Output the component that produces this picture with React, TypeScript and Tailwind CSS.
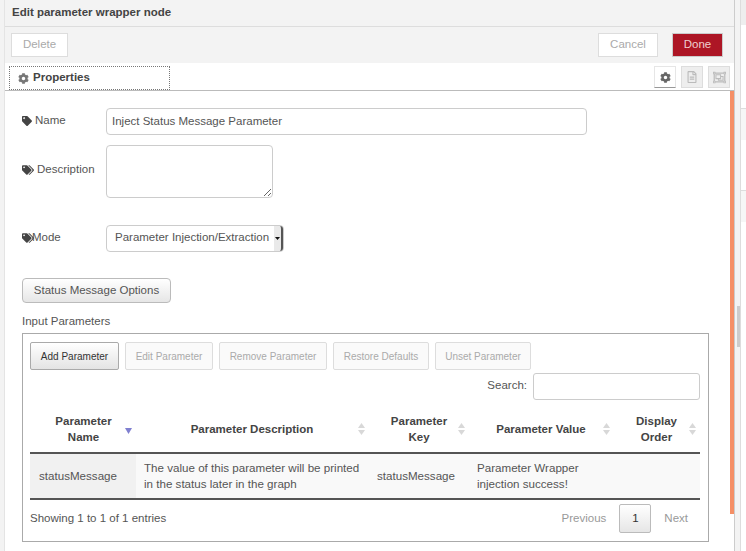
import { FaCog, FaRegFileAlt, FaRegObjectGroup, FaTag, FaTags } from "react-icons/fa";

const DISABLED_ACTIONS = [
  { label: "Edit Parameter", width: "w-[88px]" },
  { label: "Remove Parameter", width: "w-[108px]" },
  { label: "Restore Defaults", width: "w-[96px]" },
  { label: "Unset Parameter", width: "w-[96px]" },
];

function SortIcon({ active }: { active?: boolean }) {
  if (active) {
    return (
      <svg width="7" height="6" viewBox="0 0 7 6" className="shrink-0">
        <path d="M0 0h7L3.5 6z" fill="#8080d0" />
      </svg>
    );
  }
  return (
    <svg width="7" height="12" viewBox="0 0 7 12" className="shrink-0">
      <path d="M3.5 0L7 5H0z" fill="#d8d8d8" />
      <path d="M0 7h7l-3.5 5z" fill="#d8d8d8" />
    </svg>
  );
}

function HeadCell({ children, active, pad }: { children: React.ReactNode; active?: boolean; pad: string }) {
  return (
    <th className="p-0 pt-[5px] align-middle font-bold text-[#444]">
      <div className={`flex items-center justify-between leading-4 ${pad}`}>
        <span className="flex-1 text-center">{children}</span>
        <span className={active ? "mt-[4px]" : ""}>
          <SortIcon active={active} />
        </span>
      </div>
    </th>
  );
}

function IconButton({ children, active }: { children: React.ReactNode; active?: boolean }) {
  return (
    <div
      className={`flex h-[22px] w-[22px] items-center justify-center border ${
        active ? "border-[#e6e6e6] border-b-[#999] bg-white text-[#666]" : "border-[#ddd] bg-[#eee] text-[#bbb]"
      }`}
    >
      {children}
    </div>
  );
}

export default function App() {
  return (
    <div className="flex h-[551px] w-[746px] overflow-hidden bg-[#f3f3f3] font-['Liberation_Sans',sans-serif] text-[11.5px] text-[#555]">
      <div className="w-[5px] shrink-0 border-r border-[#e4e4e4] bg-[#f3f3f3]" />

      <div className="flex w-[730px] shrink-0 flex-col border-r border-[#ccc] bg-white">
        <div className="flex h-[27px] shrink-0 items-center border-b border-[#ddd] bg-[#f3f3f3] pl-[7px] font-bold text-[#444]">
          Edit parameter wrapper node
        </div>

        <div className="flex h-[36px] shrink-0 items-center bg-[#f3f3f3] pl-[6px] pr-[11px]">
          <button className="h-[24px] w-[57px] border border-[#ddd] bg-white text-[#aaa]">Delete</button>
          <button className="ml-auto h-[24px] w-[60px] border border-[#ddd] bg-white text-[#aaa]">Cancel</button>
          <button className="ml-[14px] h-[24px] w-[51px] border border-[#ccc] bg-[#ad1625] text-[#f0d0d0]">Done</button>
        </div>

        <div className="flex h-[28px] shrink-0 items-end border-b border-[#bbb] pl-[4px] pr-[4px]">
          <div className="flex h-[24px] w-[161px] items-center gap-[4px] border border-dotted border-[#777] bg-white pl-[8px] font-bold text-[#444]">
            <FaCog size={11} className="text-[#777]" />
            Properties
          </div>
          <div className="mb-[2px] ml-auto flex gap-[5px]">
            <IconButton active>
              <FaCog size={11} />
            </IconButton>
            <IconButton>
              <FaRegFileAlt size={12} />
            </IconButton>
            <IconButton>
              <FaRegObjectGroup size={13} />
            </IconButton>
          </div>
        </div>

        <div className="relative flex-1 pl-[17px] pr-[26px] pt-[16px]">
          <div className="absolute right-0 top-0 h-[423px] w-[4px] bg-[#f58f66]" />

          <div className="flex h-[28px] items-center">
            <label className="flex w-[84px] items-center gap-[3px]">
              <FaTag size={10} className="text-[#444]" />
              Name
            </label>
            <input
              readOnly
              value="Inject Status Message Parameter"
              className="h-[27px] w-[481px] rounded-[4px] border border-[#ccc] px-[5px] text-[#555] outline-none"
            />
          </div>

          <div className="mt-[10px] flex items-start">
            <label className="flex h-[50px] w-[84px] items-center gap-[3px]">
              <FaTags size={12} className="text-[#444]" />
              Description
            </label>
            <textarea
              readOnly
              className="block h-[53px] w-[167px] rounded-[4px] border border-[#ccc] outline-none"
            />
          </div>

          <div className="mt-[26px] flex h-[28px] items-center">
            <label className="flex w-[84px] items-center">
              <FaTags size={12} className="-mr-[2px] text-[#444]" />
              Mode
            </label>
            <div className="flex h-[27px] w-[178px] items-center justify-between rounded-[4px] border border-[#ccc] pl-[8px]">
              <span className="whitespace-nowrap">Parameter Injection/Extraction</span>
              <span className="flex h-full w-[9px] items-center justify-center rounded-r-[3px] border-r-2 border-[#555] bg-[#e9e9e9]">
                <svg width="5" height="3" viewBox="0 0 5 3">
                  <path d="M0 0h5L2.5 3z" fill="#111" />
                </svg>
              </span>
            </div>
          </div>

          <button className="mt-[26px] block h-[25px] w-[149px] rounded-[4px] border border-[#bbb] bg-gradient-to-b from-white to-[#e6e6e6] text-[#555]">
            Status Message Options
          </button>

          <div className="mt-[11px] leading-[14px]">Input Parameters</div>

          <div className="mt-[5px] h-[209px] w-[687px] border border-[#aaa] pl-[7px] pr-[8px] pt-[8px]">
            <div className="flex gap-[6px]">
              <button className="h-[28px] w-[89px] rounded-[2px] border border-[#aaa] bg-gradient-to-b from-white to-[#e4e4e4] text-[10px] text-[#333]">
                Add Parameter
              </button>
              {DISABLED_ACTIONS.map((action) => (
                <button
                  key={action.label}
                  className={`h-[28px] rounded-[2px] border border-[#ddd] bg-[#fafafa] text-[10px] text-[#aaa] ${action.width}`}
                >
                  {action.label}
                </button>
              ))}
            </div>

            <div className="mt-[3px] flex h-[27px] items-center justify-end gap-[6px]">
              <span className="-mt-[2px]">Search:</span>
              <input readOnly className="h-[27px] w-[167px] rounded-[3px] border border-[#ccc] outline-none" />
            </div>

            <table className="w-[670px] table-fixed border-collapse">
              <colgroup>
                <col className="w-[106px]" />
                <col className="w-[233px]" />
                <col className="w-[102px]" />
                <col className="w-[139px]" />
                <col className="w-[90px]" />
              </colgroup>
              <thead>
                <tr className="h-[53px] border-b-2 border-[#555]">
                  <HeadCell active pad="pl-[12px] pr-[4px]">
                    Parameter Name
                  </HeadCell>
                  <HeadCell pad="pl-[10px] pr-[4px]">Parameter Description</HeadCell>
                  <HeadCell pad="pl-[11px] pr-[6px]">
                    Parameter
                    <br />
                    Key
                  </HeadCell>
                  <HeadCell pad="pl-[8px]">Parameter Value</HeadCell>
                  <HeadCell pad="pl-[14px] pr-[4px]">
                    Display
                    <br />
                    Order
                  </HeadCell>
                </tr>
              </thead>
              <tbody>
                <tr className="h-[46px] border-b-2 border-[#555] bg-[#f9f9f9] text-[11.6px] leading-4">
                  <td className="bg-[#f1f1f1] pl-[9px]">statusMessage</td>
                  <td className="pl-[8px]">
                    The value of this parameter will be printed
                    <br />
                    in the status later in the graph
                  </td>
                  <td className="pl-[8px]">statusMessage</td>
                  <td className="pl-[6px]">
                    Parameter Wrapper
                    <br />
                    injection success!
                  </td>
                  <td />
                </tr>
              </tbody>
            </table>

            <div className="flex items-start justify-between">
              <span className="mt-[10px]">Showing 1 to 1 of 1 entries</span>
              <div className="mr-[12px] mt-[4px] flex items-center">
                <span className="mr-[13px] text-[#999]">Previous</span>
                <span className="flex h-[29px] w-[32px] items-center justify-center rounded-[2px] border border-[#bbb] bg-gradient-to-b from-white to-[#e6e6e6] text-[#333]">
                  1
                </span>
                <span className="ml-[13px] text-[#999]">Next</span>
              </div>
            </div>
          </div>
        </div>
      </div>

      <div className="w-[6px] shrink-0 border-r border-[#ddd] pl-[2px] pt-[306px]">
        <div className="h-[41px] w-[3px] bg-[#ccc]" />
      </div>

      <div className="flex-1 bg-white">
        <div className="h-[25px] bg-[#eee]" />
        <div className="mt-[83px] h-[32px] border-t border-[#ddd] bg-[#f6f6f6]" />
        <div className="mt-[50px] h-[32px] border-t border-[#ddd] bg-[#f6f6f6]" />
      </div>
    </div>
  );
}
